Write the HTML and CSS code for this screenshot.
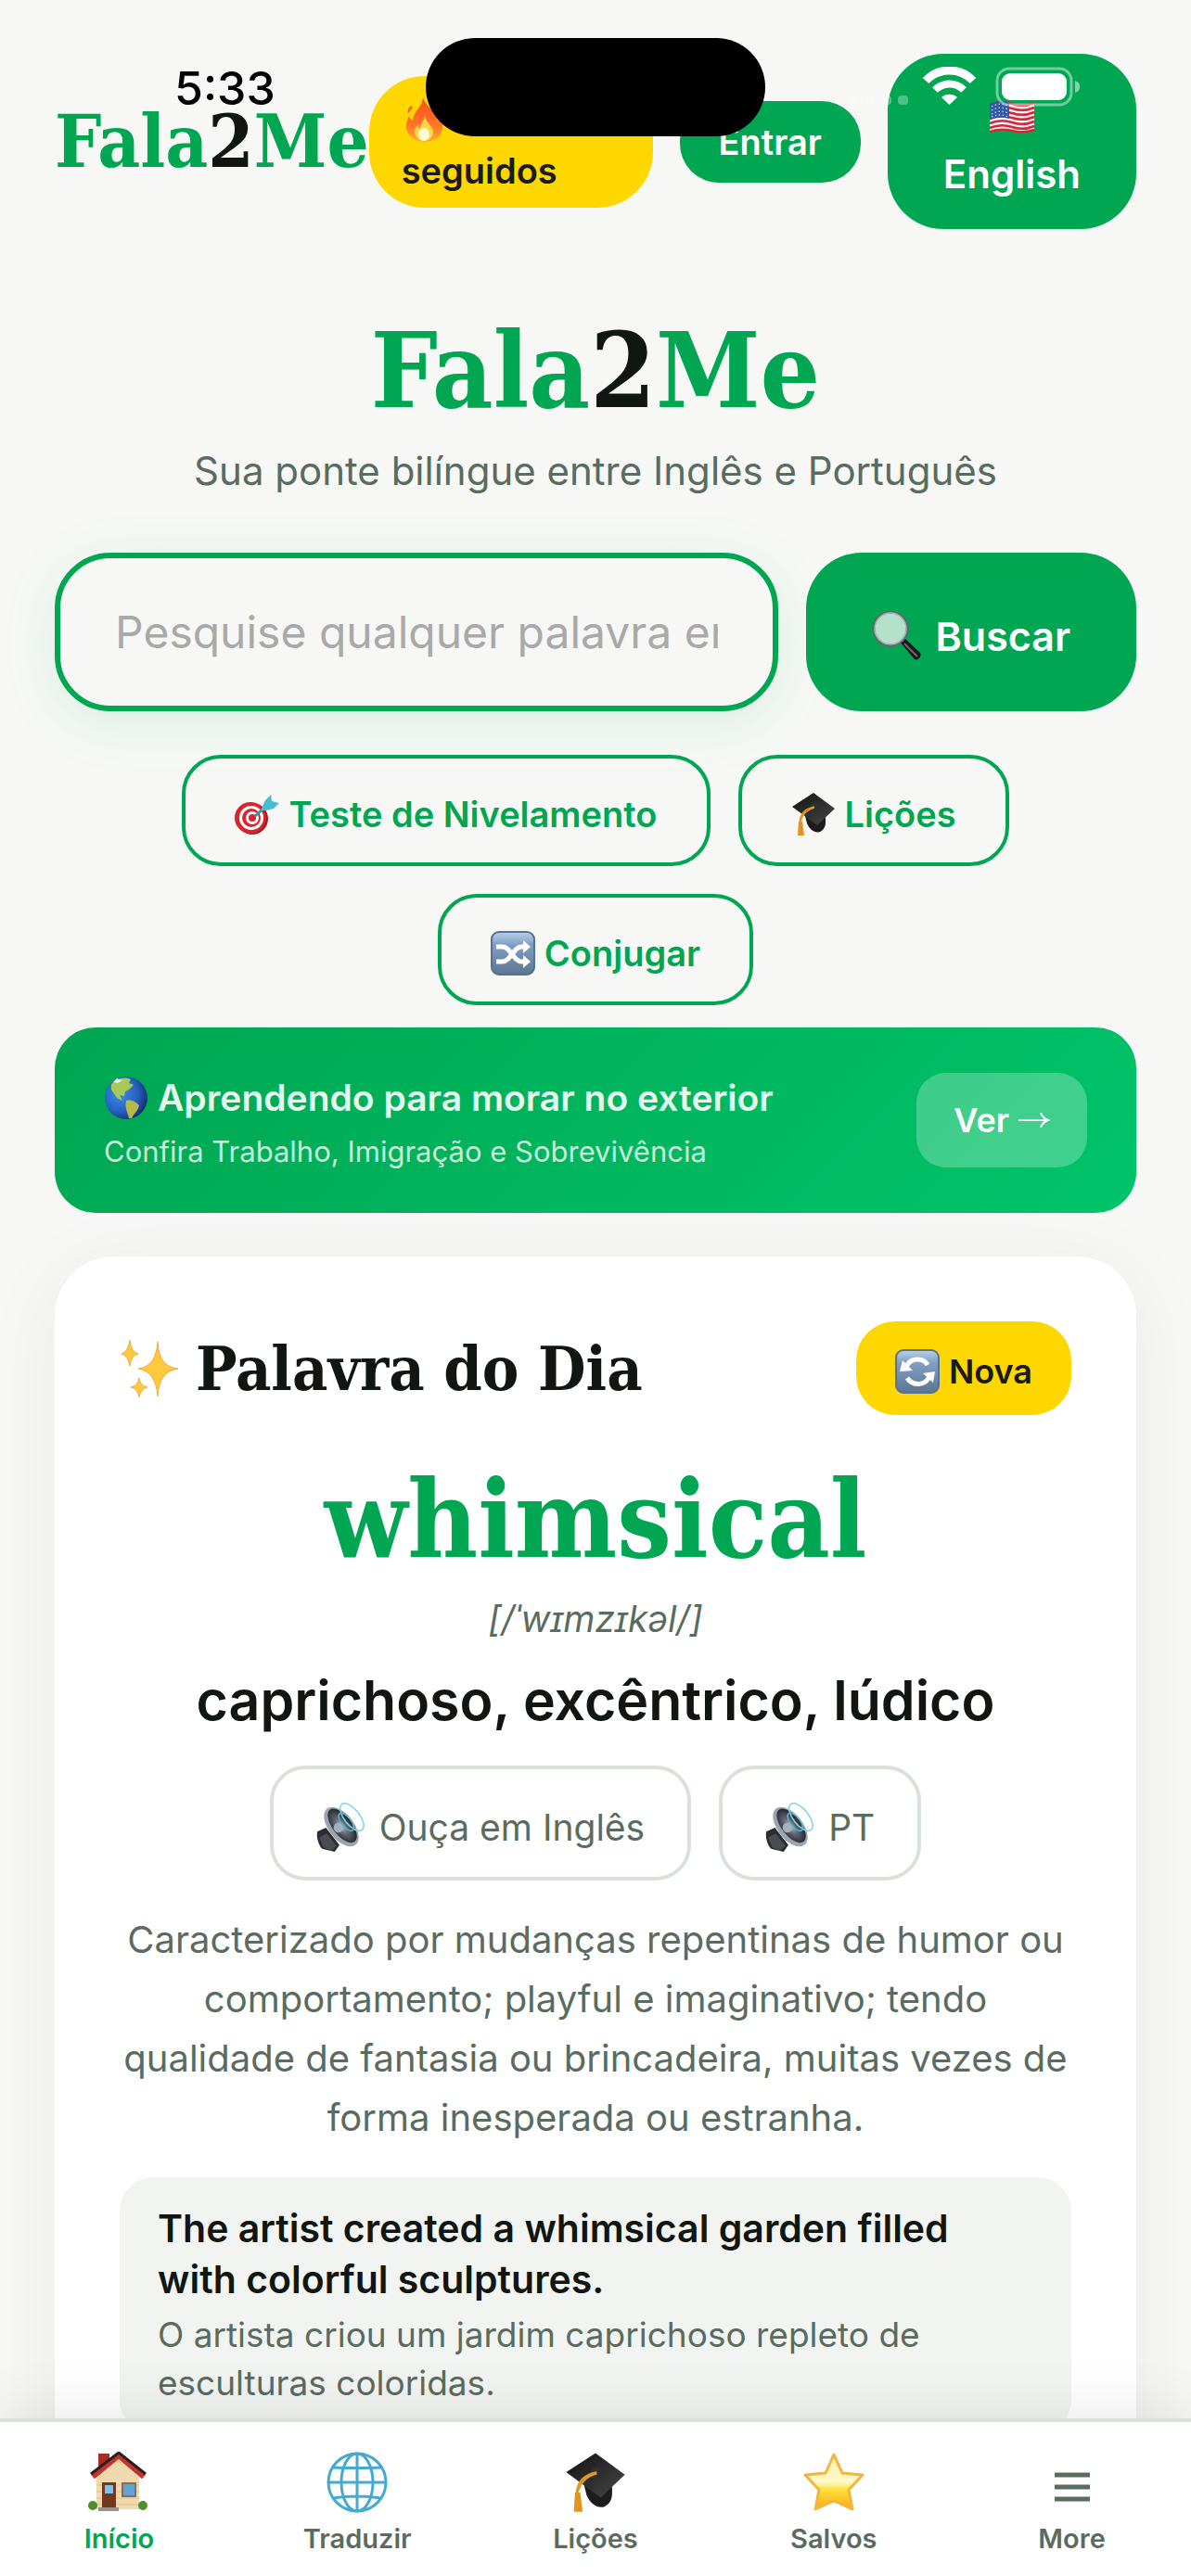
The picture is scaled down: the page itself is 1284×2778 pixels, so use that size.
FILE: index.html
```html
<!DOCTYPE html>
<html lang="pt-BR">
<head>
<meta charset="UTF-8">
<meta name="viewport" content="width=device-width, initial-scale=1.0">
<title>Fala2Me</title>
<link rel="stylesheet" href="styles.css">
</head>
<body>
<svg class="sprite" aria-hidden="true">
    <defs>
        <linearGradient id="blueTile" x1="0" y1="0" x2="0" y2="1">
            <stop offset="0" stop-color="#b9d0e8"/>
            <stop offset="0.3" stop-color="#7f9fc4"/>
            <stop offset="1" stop-color="#5d7690"/>
        </linearGradient>
        <linearGradient id="fireFill" x1="0" y1="0" x2="0" y2="1">
            <stop offset="0" stop-color="#ff4d1c"/>
            <stop offset="0.6" stop-color="#ff7426"/>
            <stop offset="1" stop-color="#ffa630"/>
        </linearGradient>
        <linearGradient id="starFill" x1="0" y1="0" x2="0" y2="1">
            <stop offset="0" stop-color="#fff3b0"/>
            <stop offset="0.5" stop-color="#fff9c8"/>
            <stop offset="0.65" stop-color="#ffdf38"/>
            <stop offset="1" stop-color="#f8a91b"/>
        </linearGradient>
        <radialGradient id="earthFill" cx="0.35" cy="0.4" r="0.7">
            <stop offset="0" stop-color="#3f8fe8"/>
            <stop offset="0.6" stop-color="#2560c0"/>
            <stop offset="1" stop-color="#152a66"/>
        </radialGradient>
        <linearGradient id="capFill" x1="0" y1="0" x2="1" y2="1">
            <stop offset="0" stop-color="#111"/>
            <stop offset="1" stop-color="#484848"/>
        </linearGradient>
        <radialGradient id="coneFill" cx="0.45" cy="0.5" r="0.6">
            <stop offset="0" stop-color="#b8bfca"/>
            <stop offset="0.35" stop-color="#666c78"/>
            <stop offset="1" stop-color="#15161a"/>
        </radialGradient>
    </defs>
    <symbol id="cap" viewBox="0 0 48 48">
        <path d="M14 22l3 12c3 7 9 11 14 9 4-2 6-6 6-10V20z" fill="#1c1c1c"/>
        <path d="M24 1 47 18 28 36 1 16z" fill="url(#capFill)"/>
        <ellipse cx="25" cy="15" rx="4" ry="3" fill="#2f2f2f"/>
        <path d="M25 16C16 18 10 22 9 33M25 17c-8 2-13 7-15 15" fill="none" stroke="#e09a22" stroke-width="1.500"/>
        <path d="M8 32h4l2 15H7z" fill="#e3941d"/>
    </symbol>
    <symbol id="speaker" viewBox="0 0 52 52">
        <path d="M1 30 10 26 24 44 19 51 6 48C2 43 0 36 1 30z" fill="#2b2c31"/>
        <path d="M3 36l8-4 10 13-6 5-8-4z" fill="#4a4c52"/>
        <ellipse cx="26" cy="25" rx="13" ry="24" transform="rotate(-38 26 25)" fill="#9ca3b1"/>
        <ellipse cx="27" cy="24" rx="10" ry="21" transform="rotate(-38 27 24)" fill="url(#coneFill)"/>
        <circle cx="23" cy="26" r="5" fill="#a9b0bd"/>
        <ellipse cx="37" cy="15" rx="8" ry="17" transform="rotate(-38 37 15)" fill="none" stroke="#7ed6e8" stroke-width="1.500"/>
        <ellipse cx="31" cy="20" rx="5" ry="11" transform="rotate(-38 31 20)" fill="none" stroke="#5bb7cc" stroke-width="1.500"/>
    </symbol>
</svg>

<div class="status-bar">
    <span class="time">5:33</span>
    <span class="island"></span>
    <svg class="status-icons" viewBox="0 0 252 44" aria-hidden="true">
        <g fill="#fff">
            <rect x="0" y="31" width="10" height="10" rx="4" opacity="0.3"/>
            <rect x="18" y="31" width="10" height="10" rx="4" opacity="0.3"/>
            <rect x="36" y="31" width="10" height="10" rx="4" opacity="0.3"/>
            <rect x="53" y="31" width="11" height="10" rx="4" opacity="0.3"/>
        </g>
        <path d="M83 15a35 35 0 0 1 51 0" fill="none" stroke="#fff" stroke-width="9"/>
        <path d="M93 25a22 22 0 0 1 31 0" fill="none" stroke="#fff" stroke-width="8"/>
        <path d="M100 33a13 13 0 0 1 17 0l-8.500 8z" fill="#fff"/>
        <rect x="160" y="2" width="80" height="39" rx="13" fill="none" stroke="#fff" stroke-opacity="0.45" stroke-width="3"/>
        <rect x="165" y="7" width="70" height="29" rx="9" fill="#fff"/>
        <path d="M244 15c7 2 7 11 0 13z" fill="#fff" opacity="0.5"/>
    </svg>
</div>

<main class="content">
    <header class="top">
        <a class="logo" href="#">Fala<span class="dark">2</span>Me</a>
        <button class="streak" type="button">
            <svg class="icon-md" viewBox="0 0 48 48" aria-hidden="true">
                <path d="M23 0c2 9 14 14 16 26 1-3 1-5 0-9 7 9 7 21-1 27-7 5-21 5-27-1C1 35 6 25 8 20c1 2 2 4 4 5 0-10 10-13 11-25z" fill="url(#fireFill)"/>
                <path d="M11 9c2 4-3 5-4 9-1-4 0-8 4-9z" fill="#ff6a2a"/>
                <path d="M25 20c1 7 9 11 9 18 0 5-5 9-10 9S14 43 14 37c0-4 2-6 4-7 0 2 1 3 2 4 0-6 4-8 5-14z" fill="#ffd64a"/>
                <ellipse cx="24" cy="40" rx="6" ry="7" fill="#fffbd0"/>
            </svg>
            <span>seguidos</span>
        </button>
        <button class="login" type="button">Entrar</button>
        <button class="lang" type="button">
            <svg class="flag" viewBox="0 0 48 36" aria-hidden="true">
                <path d="M0 5Q12-1 24 4T48 2V31Q36 35 24 32T0 34z" fill="#f4f4f4"/>
                <g fill="none" stroke="#d5283c" stroke-width="2.600">
                    <path d="M0 5Q12 0 24 4T48 3"/>
                    <path d="M0 10Q12 5 24 9T48 8"/>
                    <path d="M0 15Q12 10 24 14T48 13"/>
                    <path d="M0 20Q12 15 24 19T48 18"/>
                    <path d="M0 25Q12 20 24 24T48 23"/>
                    <path d="M0 30Q12 25 24 29T48 28"/>
                    <path d="M0 34Q12 30 24 33T48 32"/>
                </g>
                <path d="M0 4Q11-1 21 3V20Q11 17 0 21z" fill="#3458a4"/>
                <g fill="none" stroke="#c9d6ef" stroke-width="1.400" stroke-dasharray="1.400 2.600">
                    <path d="M2 7Q11 2 20 6M2 11Q11 6 20 10M2 15Q11 10 20 14M2 18Q11 14 20 18"/>
                </g>
            </svg>
            <span>English</span>
        </button>
    </header>

    <section class="hero">
        <h1>Fala<span class="dark">2</span>Me</h1>
        <p class="tagline">Sua ponte bilíngue entre Inglês e Português</p>
    </section>

    <form class="search" onsubmit="return false">
        <input type="text" aria-label="Pesquisar palavra" placeholder="Pesquise qualquer palavra em inglês ou português">
        <button type="submit">
            <svg class="icon-lg" viewBox="0 0 54 54" aria-hidden="true">
                <path d="M30 33 35 29 52 45c2 3-2 9-6 7z" fill="#16181b"/>
                <path d="M35 35 49 49" stroke="#6b6f75" stroke-width="2"/>
                <circle cx="20" cy="19" r="18" fill="#b5e0c9" stroke="#5f656b" stroke-width="3"/>
                <circle cx="20" cy="19" r="17" fill="none" stroke="#aab0b6" stroke-width="1.500"/>
            </svg>
            Buscar
        </button>
    </form>

    <nav class="shortcuts" aria-label="Atalhos">
        <button class="chip" type="button">
            <svg class="icon-md" viewBox="0 0 48 48" aria-hidden="true">
                <ellipse cx="19" cy="29" rx="17" ry="17" fill="#a3151f"/>
                <circle cx="17" cy="28" r="17" fill="#d9232e"/>
                <circle cx="18" cy="28" r="13" fill="#fff"/>
                <circle cx="18" cy="28" r="10" fill="#d9232e"/>
                <circle cx="19" cy="28" r="7" fill="#fff"/>
                <circle cx="19" cy="28" r="4" fill="#d9232e"/>
                <path d="M22 26 40 10" stroke="#2a98b0" stroke-width="3"/>
                <path d="M28 20 33 9 39 3 40 10 48 12 42 18 34 20z" fill="#49bdd0"/>
            </svg>
            Teste de Nivelamento
        </button>
        <button class="chip" type="button">
            <svg class="icon-md" aria-hidden="true"><use href="#cap"/></svg>
            Lições
        </button>
        <button class="chip" type="button">
            <svg class="icon-md" viewBox="0 0 48 48" aria-hidden="true">
                <rect x="1" y="1" width="46" height="46" rx="8" fill="url(#blueTile)" stroke="#55718f" stroke-width="2"/>
                <path d="M6 17h7c8 0 12 16 20 16h4M6 33h7c8 0 12-16 20-16h4" fill="none" stroke="#fff" stroke-width="5"/>
                <path d="M35 10 43 17 35 24zM35 26 43 33 35 40z" fill="#fff"/>
            </svg>
            Conjugar
        </button>
    </nav>

    <section class="banner">
        <div class="banner-text">
            <h2>
                <svg class="icon-md" viewBox="0 0 48 48" aria-hidden="true">
                    <circle cx="24" cy="24" r="23" fill="url(#earthFill)"/>
                    <path d="M8 9C14 3 22 1 29 4l-2 4 5 2-5 5-4 2-1 5-5-1 3 6-6-3-6-9z" fill="#a8c956"/>
                    <path d="M24 27c5-2 10 1 14 5-1 6-6 9-8 14h-3c-1-6-5-11-3-19z" fill="#b5b84a"/>
                    <path d="M14 3l6 2-5 3-5-1z" fill="#e8efe0"/>
                </svg>
                Aprendendo para morar no exterior
            </h2>
            <p>Confira Trabalho, Imigração e Sobrevivência</p>
        </div>
        <button class="banner-btn" type="button">
            Ver
            <svg class="arrow" viewBox="0 0 34 20" aria-hidden="true">
                <path d="M0 10H32M24 2q2 6 8 8q-6 2-8 8" fill="none" stroke="#fff" stroke-width="2"/>
            </svg>
        </button>
    </section>

    <section class="card">
        <div class="card-head">
            <h2>
                <svg class="sparkles" viewBox="0 0 64 64" aria-hidden="true">
                    <g fill="#ffc93c" stroke="#f7a94a" stroke-width="1">
                        <path d="M41 3Q42 30 63 32Q42 35 41 62Q39 35 20 32Q39 30 41 3z"/>
                        <path d="M11 1Q12 14 20 16Q12 18 11 29Q9 18 2 16Q9 14 11 1z"/>
                        <path d="M21 42Q22 50 30 52Q22 54 21 63Q20 54 12 52Q20 50 21 42z"/>
                    </g>
                </svg>
                Palavra do Dia
            </h2>
            <button class="new-word" type="button">
                <svg class="icon-md" viewBox="0 0 48 48" aria-hidden="true">
                    <rect x="1" y="1" width="46" height="46" rx="8" fill="url(#blueTile)" stroke="#55718f" stroke-width="2"/>
                    <path d="M12 20C15 9 30 8 35 17M37 29C33 40 19 40 13 31" fill="none" stroke="#fff" stroke-width="5"/>
                    <path d="M5 24 8 12 19 23zM43 24 41 36 30 26z" fill="#fff"/>
                </svg>
                Nova
            </button>
        </div>

        <p class="word">whimsical</p>
        <p class="phonetic">[/ˈwɪmzɪkəl/]</p>
        <p class="translation">caprichoso, excêntrico, lúdico</p>

        <div class="listen">
            <button type="button">
                <svg class="icon-lg" aria-hidden="true"><use href="#speaker"/></svg>
                Ouça em Inglês
            </button>
            <button type="button">
                <svg class="icon-lg" aria-hidden="true"><use href="#speaker"/></svg>
                PT
            </button>
        </div>

        <p class="definition">Caracterizado por mudanças repentinas de humor ou comportamento; playful e imaginativo; tendo qualidade de fantasia ou brincadeira, muitas vezes de forma inesperada ou estranha.</p>

        <div class="example">
            <p class="example-en">The artist created a whimsical garden filled with colorful sculptures.</p>
            <p class="example-pt">O artista criou um jardim caprichoso repleto de esculturas coloridas.</p>
        </div>
    </section>
</main>

<nav class="tabs" aria-label="Principal">
    <a class="active" href="#">
        <svg viewBox="0 0 66 66" aria-hidden="true">
            <path d="M11 2h12v14L11 26z" fill="#a82c26"/>
            <path d="M9 28 33 5 55 28V62H9z" fill="#efd9ae"/>
            <path d="M9 36h46M9 43h46M9 50h46M9 57h46" stroke="#dfc391" stroke-width="1"/>
            <path d="M5 27 33 4 60 27" fill="none" stroke="#c8322b" stroke-width="6"/>
            <path d="M3 24 33 1 62 24" fill="none" stroke="#26201f" stroke-width="3"/>
            <rect x="15" y="33" width="15" height="27" fill="#73371f"/>
            <rect x="18" y="36" width="9" height="9" fill="#7fc0ee"/>
            <rect x="36" y="33" width="16" height="16" fill="#8a6c4e"/>
            <rect x="38" y="35" width="12" height="12" fill="#5fa3dc"/>
            <circle cx="5" cy="58" r="5" fill="#4d8f2c"/>
            <circle cx="59" cy="58" r="5" fill="#4d8f2c"/>
            <path d="M11 60h22v4H11z" fill="#9c9187"/>
        </svg>
        <span>Início</span>
    </a>
    <a href="#">
        <svg viewBox="0 0 66 66" aria-hidden="true">
            <g fill="none" stroke="#45a9d0" stroke-width="3">
                <circle cx="33" cy="33" r="31"/>
                <ellipse cx="33" cy="33" rx="17" ry="31"/>
                <path d="M33 2V64M2 33H64M7 17Q33 18 59 17M7 50Q33 46 59 50"/>
            </g>
        </svg>
        <span>Traduzir</span>
    </a>
    <a href="#">
        <svg aria-hidden="true"><use href="#cap"/></svg>
        <span>Lições</span>
    </a>
    <a href="#">
        <svg viewBox="0 0 66 66" aria-hidden="true">
            <path d="M33 3 42 23 64 25 49 41 53 62 33 53 13 62 17 41 2 25 24 23z" fill="url(#starFill)" stroke="#f5b53a" stroke-width="3" stroke-linejoin="round"/>
        </svg>
        <span>Salvos</span>
    </a>
    <a href="#">
        <svg viewBox="0 0 66 66" aria-hidden="true">
            <path d="M14 25H52M14 38H52M14 51H52" stroke="#5a6b60" stroke-width="5"/>
        </svg>
        <span>More</span>
    </a>
</nav>
</body>
</html>
```
FILE: styles.css
```css
* {
    box-sizing: border-box;
    margin: 0;
    padding: 0;
}
body {
    font-family: Inter, "Liberation Sans", sans-serif;
    background-color: #f7f8f5;
    color: #111612;
    height: 100vh;
    display: flex;
    flex-direction: column;
}
button, input {
    font-family: inherit;
    border: none;
}
button {
    cursor: pointer;
    display: flex;
    align-items: center;
    justify-content: center;
    gap: 10px;
    white-space: nowrap;
}
a {
    text-decoration: none;
}
svg {
    flex-shrink: 0;
}
.sprite {
    position: absolute;
    width: 0;
    height: 0;
}
.dark {
    color: #111612;
}
.icon-md {
    width: 48px;
    height: 48px;
}
.icon-lg {
    width: 54px;
    height: 54px;
}

/* phone status bar, drawn over the page */
.status-bar {
    position: absolute;
    top: 0;
    left: 0;
    right: 0;
    height: 190px;
    z-index: 2;
    pointer-events: none;
}
.time {
    position: absolute;
    top: 65px;
    left: 188px;
    font-size: 50px;
    line-height: 60px;
    font-weight: 500;
    color: #000;
}
.island {
    position: absolute;
    top: 41px;
    left: 50%;
    width: 366px;
    height: 106px;
    margin-left: -183px;
    border-radius: 53px;
    background-color: #000;
}
.status-icons {
    position: absolute;
    top: 72px;
    right: 117px;
    width: 252px;
    height: 44px;
}

.content {
    flex: 1;
    min-height: 0;
    overflow-y: auto;
    scrollbar-width: none;
    padding: 58px 59px 24px;
}

.top {
    display: flex;
    align-items: center;
    gap: 29px;
}
.logo {
    font-family: "DejaVu Serif Condensed", "DejaVu Serif", serif;
    font-size: 79px;
    line-height: 96px;
    font-weight: bold;
    color: #00a651;
    margin-right: -29px;
}
.streak {
    flex: 1;
    flex-direction: column;
    align-items: flex-start;
    gap: 6px;
    padding: 23px 35px 15px;
    border-radius: 60px;
    background-color: #ffd700;
    color: #1a1a1a;
    font-size: 38px;
    line-height: 50px;
    font-weight: 600;
}
.login {
    padding: 20px 42px;
    border-radius: 42px;
    background-color: #00a651;
    color: #fff;
    font-size: 38px;
    line-height: 48px;
    font-weight: 600;
}
.lang {
    flex-direction: column;
    gap: 14px;
    padding: 50px 60px 29px;
    border-radius: 60px;
    background-color: #00a651;
    color: #fff;
    font-size: 42px;
    line-height: 60px;
    font-weight: 600;
}
.flag {
    width: 48px;
    height: 36px;
}

.hero {
    margin-top: 93px;
    text-align: center;
}
.hero h1 {
    font-family: "DejaVu Serif Condensed", "DejaVu Serif", serif;
    font-size: 113px;
    line-height: 120px;
    color: #00a651;
}
.tagline {
    margin-top: 16px;
    font-size: 42px;
    line-height: 64px;
    color: #5a6b60;
}

.search {
    display: flex;
    gap: 30px;
    margin-top: 56px;
}
.search input {
    flex: 1;
    min-width: 0;
    height: 171px;
    padding: 0 59px;
    border: 6px solid #00a651;
    border-radius: 60px;
    background-color: #f7f8f5;
    box-shadow: 0 12px 60px rgba(0, 166, 81, 0.12);
    font-size: 48px;
    color: #111612;
}
.search input::placeholder {
    color: #a9a9a9;
    opacity: 1;
}
.search button {
    gap: 14px;
    padding: 8px 71px 0;
    border-radius: 60px;
    background-color: #00a651;
    color: #fff;
    font-size: 43px;
    font-weight: 600;
}

.shortcuts {
    display: flex;
    flex-wrap: wrap;
    justify-content: center;
    gap: 30px;
    margin-top: 47px;
}
.chip {
    padding: 36px 53px 28px;
    border: 4px solid #00a651;
    border-radius: 42px;
    background-color: transparent;
    color: #00a651;
    font-size: 38px;
    line-height: 48px;
    font-weight: 600;
}

.banner {
    display: flex;
    align-items: center;
    justify-content: space-between;
    margin-top: 24px;
    padding: 44px 53px;
    border-radius: 44px;
    background: linear-gradient(135deg, #00a651, #00c46a);
}
.banner h2 {
    display: flex;
    align-items: center;
    gap: 10px;
    font-size: 39px;
    line-height: 64px;
    font-weight: 600;
    color: #e6f7ee;
}
.banner p {
    margin-top: 4px;
    font-size: 31px;
    line-height: 44px;
    color: #c5eed8;
}
.banner-btn {
    padding: 26px 40px;
    border-radius: 32px;
    background-color: rgba(255, 255, 255, 0.25);
    color: #fff;
    font-size: 36px;
    line-height: 50px;
    font-weight: 600;
}
.arrow {
    width: 34px;
    height: 20px;
}

.card {
    margin-top: 47px;
    padding: 70px;
    border-radius: 64px;
    background-color: #fff;
    box-shadow: 0 12px 90px rgba(0, 0, 0, 0.05);
    text-align: center;
}
.card-head {
    display: flex;
    align-items: center;
    justify-content: space-between;
}
.card-head h2 {
    display: flex;
    align-items: center;
    gap: 18px;
    font-family: "DejaVu Serif Condensed", "DejaVu Serif", serif;
    font-size: 66px;
    line-height: 80px;
}
.sparkles {
    width: 64px;
    height: 64px;
}
.new-word {
    padding: 30px 42px 23px;
    border-radius: 42px;
    background-color: #ffd700;
    color: #1a1a1a;
    font-size: 36px;
    line-height: 48px;
    font-weight: 600;
}
.word {
    margin-top: 52px;
    font-family: "DejaVu Serif Condensed", "DejaVu Serif", serif;
    font-size: 116px;
    line-height: 120px;
    font-weight: bold;
    color: #00a651;
}
.phonetic {
    margin-top: 16px;
    font-size: 39px;
    line-height: 64px;
    font-style: italic;
    color: #5a6b60;
}
.translation {
    margin-top: 16px;
    font-size: 59px;
    line-height: 80px;
    font-weight: 600;
}
.listen {
    display: flex;
    justify-content: center;
    gap: 30px;
    margin-top: 30px;
}
.listen button {
    gap: 14px;
    padding: 36px 46px 26px;
    border: 4px solid #d8e2da;
    border-radius: 38px;
    background-color: #fff;
    color: #5a6b60;
    font-size: 39px;
    line-height: 54px;
}
.definition {
    margin-top: 32px;
    font-size: 40px;
    line-height: 64px;
    color: #5a6b60;
}
.example {
    margin-top: 32px;
    padding: 28px 41px;
    border-radius: 36px;
    background-color: #f2f4f1;
    text-align: left;
}
.example-en {
    font-size: 41px;
    line-height: 55px;
    font-weight: 600;
}
.example-pt {
    margin-top: 6px;
    font-size: 37px;
    line-height: 52px;
    color: #5a6b60;
}

.tabs {
    position: relative;
    display: grid;
    grid-template-columns: repeat(5, 1fr);
    padding: 32px 0 22px;
    border-top: 4px solid #d8e2da;
    background-color: #fff;
    box-shadow: 0 -12px 60px rgba(0, 0, 0, 0.08);
}
.tabs a {
    display: flex;
    flex-direction: column;
    align-items: center;
    gap: 10px;
    color: #5a6b60;
    font-size: 29px;
    line-height: 36px;
    font-weight: 600;
}
.tabs .active {
    color: #00a651;
}
.tabs svg {
    width: 66px;
    height: 66px;
}
```
